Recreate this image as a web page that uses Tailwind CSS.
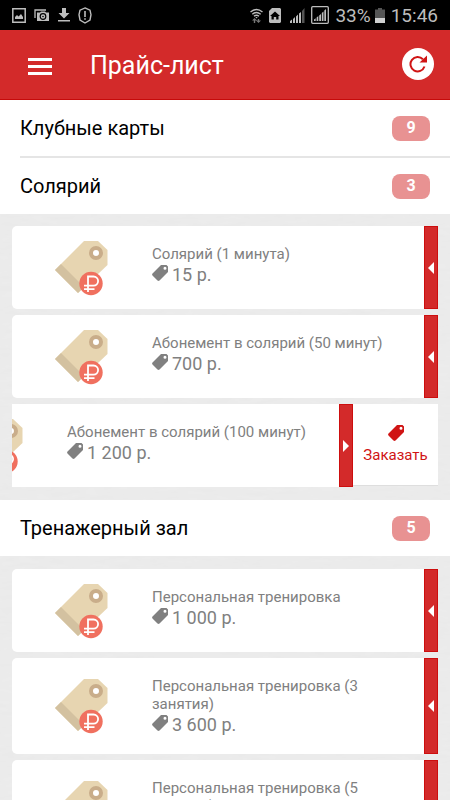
<!DOCTYPE html>
<html lang="ru">
<head>
<meta charset="utf-8">
<meta name="viewport" content="width=device-width, initial-scale=1">
<title>Прайс-лист</title>
<script src="https://cdn.jsdelivr.net/npm/@tailwindcss/browser@4"></script>
</head>
<body class="h-screen flex flex-col overflow-hidden bg-[#ebebeb] font-[Roboto,'Noto_Sans',sans-serif] text-black">

<!-- Shared icons -->
<svg class="hidden" aria-hidden="true">
  <symbol id="price-tag" viewBox="0 0 54 56">
    <path fill="#e7d5b1" d="M29 1h14l9.500 9v15L23 53 0 30z"/>
    <path fill="#d3c1a0" d="M6 24l23 23-6 6L0 30z"/>
    <circle cx="41" cy="13" r="5" fill="#fff" stroke="#c9ad8a" stroke-width="4"/>
    <circle cx="36" cy="43.500" r="11.700" fill="#f0705f"/>
    <path fill="none" stroke="#fff" stroke-width="1.800" d="M33 52V36.500h5.500a4.500 4.500 0 0 1 0 9.200H29M29 49.200h10.500"/>
  </symbol>
  <symbol id="tag" viewBox="0 0 16 16">
    <path fill="currentColor" fill-rule="evenodd" d="M9 0h5.500L16 1.500V7L7.500 15.500q-1 .8-2 0L.5 10.500q-.8-1 0-2zM13 1.700a1.500 1.500 0 1 0 0 3 1.500 1.500 0 0 0 0-3z"/>
  </symbol>
  <symbol id="arrow-left" viewBox="0 0 6 12"><path fill="#fff" d="M6 0v12L0 6z"/></symbol>
  <symbol id="arrow-right" viewBox="0 0 6 12"><path fill="#fff" d="M0 0v12l6-6z"/></symbol>
</svg>

<div class="h-[30px] shrink-0 bg-black text-[#bdbdbd] flex items-center justify-between px-3">
  <div class="flex items-center gap-2">
    <svg class="w-[14px] h-[15px]" viewBox="0 0 14 15"><path fill="none" stroke="currentColor" stroke-width="1.500" d="M.8.8h12.400v13.400H.8z"/><path fill="currentColor" d="M3 11V9l2-2 1.500 1.500L9 6l2 3v2z"/></svg>
    <svg class="w-[16px] h-[13px]" viewBox="0 0 16 13"><path fill="none" stroke="currentColor" stroke-width="1.300" d="M1 9V1h11"/><path fill="currentColor" d="M3 3.500h3l1-1h4l1 1h3V12H3z"/><circle cx="9" cy="7.500" r="2.800" fill="none" stroke="#000" stroke-width="1.200"/><circle cx="9" cy="7.500" r=".8" fill="#000"/></svg>
    <svg class="w-[12px] h-[14px]" viewBox="0 0 12 14"><path fill="currentColor" d="M4 0h4v5h3.500L6 10.500.5 5H4zM0 12h12v1.500H0z"/></svg>
    <svg class="w-[14px] h-[17px]" viewBox="0 0 14 17"><path fill="none" stroke="currentColor" stroke-width="1.400" d="M7 .9L12 3.200l1 4.500-1 5.300-5 3-5-3-1-5.300 1-4.500z"/><path fill="currentColor" d="M6.200 4h1.600v6H6.200zM6.200 11.200h1.600v1.600H6.200z"/></svg>
  </div>
  <div class="flex items-center">
    <svg class="w-[13px] h-[15px] mr-1.5" viewBox="0 0 13 15"><path fill="none" stroke="currentColor" stroke-width="1.400" d="M.5 4q6-5 12 0M2.300 6.200q4.200-3.500 8.400 0M4 8.300q2.500-2 5 0"/><path fill="currentColor" d="M5.300 9h2.400L6.500 10.500z"/><path fill="#777" d="M4.500 10L7 12.500H5.200V15H3.800v-2.500H2zM8.500 15L6 12.500h1.800V11h1.400v1.500H11z"/></svg>
    <svg class="w-[12px] h-[15px] mr-2" viewBox="0 0 12 15"><path fill="currentColor" d="M3 0h8l1 1v13l-1 1H1l-1-1V3z"/><path fill="#000" d="M6 3.500L11 8H9.500v3.500h-2.300V9H4.800v2.500H2.500V8H1z"/></svg>
    <svg class="w-[16px] h-[15px] mr-1.5" viewBox="0 0 16 15"><path fill="currentColor" d="M1 13l2-1.500V15H1zM4 11l2-2v6H4zM7 8.500l2-2V15H7zM10 5.500L12 4v11h-2z"/><path fill="#555" d="M13 3l2.500-3v15H13z"/></svg>
    <svg class="w-[18px] h-[18px] mr-1.5" viewBox="0 0 18 18"><rect x=".7" y=".7" width="16.600" height="16.600" rx="1" fill="none" stroke="currentColor" stroke-width="1.300"/><path fill="currentColor" d="M3 13.500l1.700-1.300V15H3zM5.600 11.500l1.700-1.500v5H5.600zM8.200 9.500L10 8v7H8.200zM10.800 7l1.700-1.500V15h-1.700zM13.300 4.500L15 3v12h-1.700z"/></svg>
    <span class="text-[19px] leading-[30px] pt-0.5">33%</span>
    <svg class="w-[10px] h-[15px] ml-1 mr-1.5" viewBox="0 0 10 15"><path fill="#555" d="M3 0h4v1.500h3V10H0V1.500h3z"/><path fill="#d0d0d0" d="M0 10h10v5H0z"/></svg>
    <span class="text-[19px] leading-[30px] pt-0.5">15:46</span>
  </div>
</div>

<header class="h-[70px] shrink-0 bg-[#d32a2a] border-b border-[#c60a0a] flex items-center pl-7 pr-4">
  <button type="button" aria-label="Меню" class="w-6 h-7 pt-1 flex flex-col justify-center gap-1">
    <span class="block h-[3px] bg-white"></span>
    <span class="block h-[3px] bg-white"></span>
    <span class="block h-[3px] bg-white"></span>
  </button>
  <h1 class="ml-[38px] flex-1 pt-0.5 text-[25px] leading-8 text-white">Прайс-лист</h1>
  <button type="button" aria-label="Обновить" class="w-8 h-8 mb-0.5 rounded-full bg-white flex items-center justify-center">
    <svg class="w-[18px] h-[18px]" viewBox="0 0 18 18"><path fill="none" stroke="#d01414" stroke-width="2" d="M15.500 11.500a7.200 7.200 0 1 1-1.600-7.300"/><path fill="#d01414" d="M18 .5v7h-7.500z"/></svg>
  </button>
</header>

<main class="relative isolate flex-1 min-h-0 overflow-y-auto [scrollbar-width:none]">
  <!-- Paper grain -->
  <svg class="absolute inset-0 -z-10 w-full h-full opacity-5" aria-hidden="true">
    <filter id="grain"><feTurbulence type="fractalNoise" baseFrequency="0.06 0.25" numOctaves="2"/><feColorMatrix values="0.330 0.330 0.330 0 0.400  0.330 0.330 0.330 0 0.400  0.330 0.330 0.330 0 0.400  0 0 0 0 1"/></filter>
    <rect width="100%" height="100%" filter="url(#grain)"/>
  </svg>

  <section class="bg-white pl-5">
    <button type="button" class="w-full h-[58px] border-b-2 border-[#e5e5e5] pr-5 flex items-center justify-between text-left">
      <span class="text-[20px] leading-6">Клубные карты</span>
      <span class="w-[38px] h-[25px] rounded-lg bg-[#e89292] text-white text-[16px] leading-6 font-bold text-center">9</span>
    </button>
  </section>

  <section>
    <button type="button" class="w-full h-14 bg-white px-5 flex items-center justify-between text-left">
      <span class="text-[20px] leading-6">Солярий</span>
      <span class="w-[38px] h-[25px] rounded-lg bg-[#e89292] text-white text-[16px] leading-6 font-bold text-center">3</span>
    </button>
    <ul class="px-3 pt-3 pb-[13px] flex flex-col gap-1.5">
      <li class="min-h-[83px] flex bg-white rounded-l-[5px] overflow-hidden">
        <div class="w-[140px] shrink-0 flex items-center justify-center"><svg class="w-[54px] h-[56px]"><use href="#price-tag"/></svg></div>
        <div class="flex-1 pt-[19px] pb-[17px] pr-4 text-[#808080]">
          <h2 class="text-[15px] leading-[18px]">Солярий (1 минута)</h2>
          <p class="flex items-center gap-1 text-[18px] leading-6"><svg class="w-4 h-4 mb-1"><use href="#tag"/></svg>15 р.</p>
        </div>
        <button type="button" aria-label="Открыть" class="w-[14px] bg-[#d32a2a] border border-[#cd0e0e] flex items-center justify-center"><svg class="w-[6px] h-3"><use href="#arrow-left"/></svg></button>
      </li>
      <li class="min-h-[83px] flex bg-white rounded-l-[5px] overflow-hidden">
        <div class="w-[140px] shrink-0 flex items-center justify-center"><svg class="w-[54px] h-[56px]"><use href="#price-tag"/></svg></div>
        <div class="flex-1 pt-[19px] pb-[17px] pr-4 text-[#808080]">
          <h2 class="text-[15px] leading-[18px]">Абонемент в солярий (50 минут)</h2>
          <p class="flex items-center gap-1 text-[18px] leading-6"><svg class="w-4 h-4 mb-1"><use href="#tag"/></svg>700 р.</p>
        </div>
        <button type="button" aria-label="Открыть" class="w-[14px] bg-[#d32a2a] border border-[#cd0e0e] flex items-center justify-center"><svg class="w-[6px] h-3"><use href="#arrow-left"/></svg></button>
      </li>
      <!-- Swiped open: the row slides left and reveals the order button -->
      <li class="flex justify-end overflow-hidden">
        <div class="min-h-[83px] w-full shrink-0 flex bg-white">
          <div class="w-[140px] shrink-0 flex items-center justify-center"><svg class="w-[54px] h-[56px]"><use href="#price-tag"/></svg></div>
          <div class="flex-1 pt-[19px] pb-[17px] pr-4 text-[#808080]">
            <h2 class="text-[15px] leading-[18px]">Абонемент в солярий (100 минут)</h2>
            <p class="flex items-center gap-1 text-[18px] leading-6"><svg class="w-4 h-4 mb-1"><use href="#tag"/></svg>1 200 р.</p>
          </div>
          <button type="button" aria-label="Закрыть" class="w-[14px] bg-[#d32a2a] border border-[#cd0e0e] flex items-center justify-center"><svg class="w-[6px] h-3"><use href="#arrow-right"/></svg></button>
        </div>
        <button type="button" class="w-[85px] shrink-0 mb-px bg-white border-b border-[#dedede] text-[#d01414] flex flex-col items-center justify-center">
          <svg class="w-4 h-4 mb-1"><use href="#tag"/></svg>
          <span class="text-[15px] leading-5">Заказать</span>
        </button>
      </li>
    </ul>
  </section>

  <section>
    <button type="button" class="w-full h-14 bg-white px-5 flex items-center justify-between text-left">
      <span class="text-[20px] leading-6">Тренажерный зал</span>
      <span class="w-[38px] h-[25px] rounded-lg bg-[#e89292] text-white text-[16px] leading-6 font-bold text-center">5</span>
    </button>
    <ul class="px-3 py-[13px] flex flex-col gap-1.5">
      <li class="min-h-[83px] flex bg-white rounded-l-[5px] overflow-hidden">
        <div class="w-[140px] shrink-0 flex items-center justify-center"><svg class="w-[54px] h-[56px]"><use href="#price-tag"/></svg></div>
        <div class="flex-1 pt-[19px] pb-[17px] pr-4 text-[#808080]">
          <h2 class="text-[15px] leading-[18px]">Персональная тренировка</h2>
          <p class="flex items-center gap-1 text-[18px] leading-6"><svg class="w-4 h-4 mb-1"><use href="#tag"/></svg>1 000 р.</p>
        </div>
        <button type="button" aria-label="Открыть" class="w-[14px] bg-[#d32a2a] border border-[#cd0e0e] flex items-center justify-center"><svg class="w-[6px] h-3"><use href="#arrow-left"/></svg></button>
      </li>
      <li class="min-h-[83px] flex bg-white rounded-l-[5px] overflow-hidden">
        <div class="w-[140px] shrink-0 flex items-center justify-center"><svg class="w-[54px] h-[56px]"><use href="#price-tag"/></svg></div>
        <div class="flex-1 pt-[19px] pb-[17px] pr-4 text-[#808080]">
          <h2 class="text-[15px] leading-[18px]">Персональная тренировка (3 занятия)</h2>
          <p class="flex items-center gap-1 text-[18px] leading-6"><svg class="w-4 h-4 mb-1"><use href="#tag"/></svg>3 600 р.</p>
        </div>
        <button type="button" aria-label="Открыть" class="w-[14px] bg-[#d32a2a] border border-[#cd0e0e] flex items-center justify-center"><svg class="w-[6px] h-3"><use href="#arrow-left"/></svg></button>
      </li>
      <li class="min-h-[96px] flex bg-white rounded-l-[5px] overflow-hidden">
        <div class="w-[140px] shrink-0 flex items-center justify-center"><svg class="w-[54px] h-[56px]"><use href="#price-tag"/></svg></div>
        <div class="flex-1 pt-[19px] pb-[17px] pr-4 text-[#808080]">
          <h2 class="text-[15px] leading-[18px]">Персональная тренировка (5 занятий)</h2>
        </div>
        <button type="button" aria-label="Открыть" class="w-[14px] bg-[#d32a2a] border border-[#cd0e0e] flex items-center justify-center"><svg class="w-[6px] h-3"><use href="#arrow-left"/></svg></button>
      </li>
    </ul>
  </section>
</main>
</body>
</html>
